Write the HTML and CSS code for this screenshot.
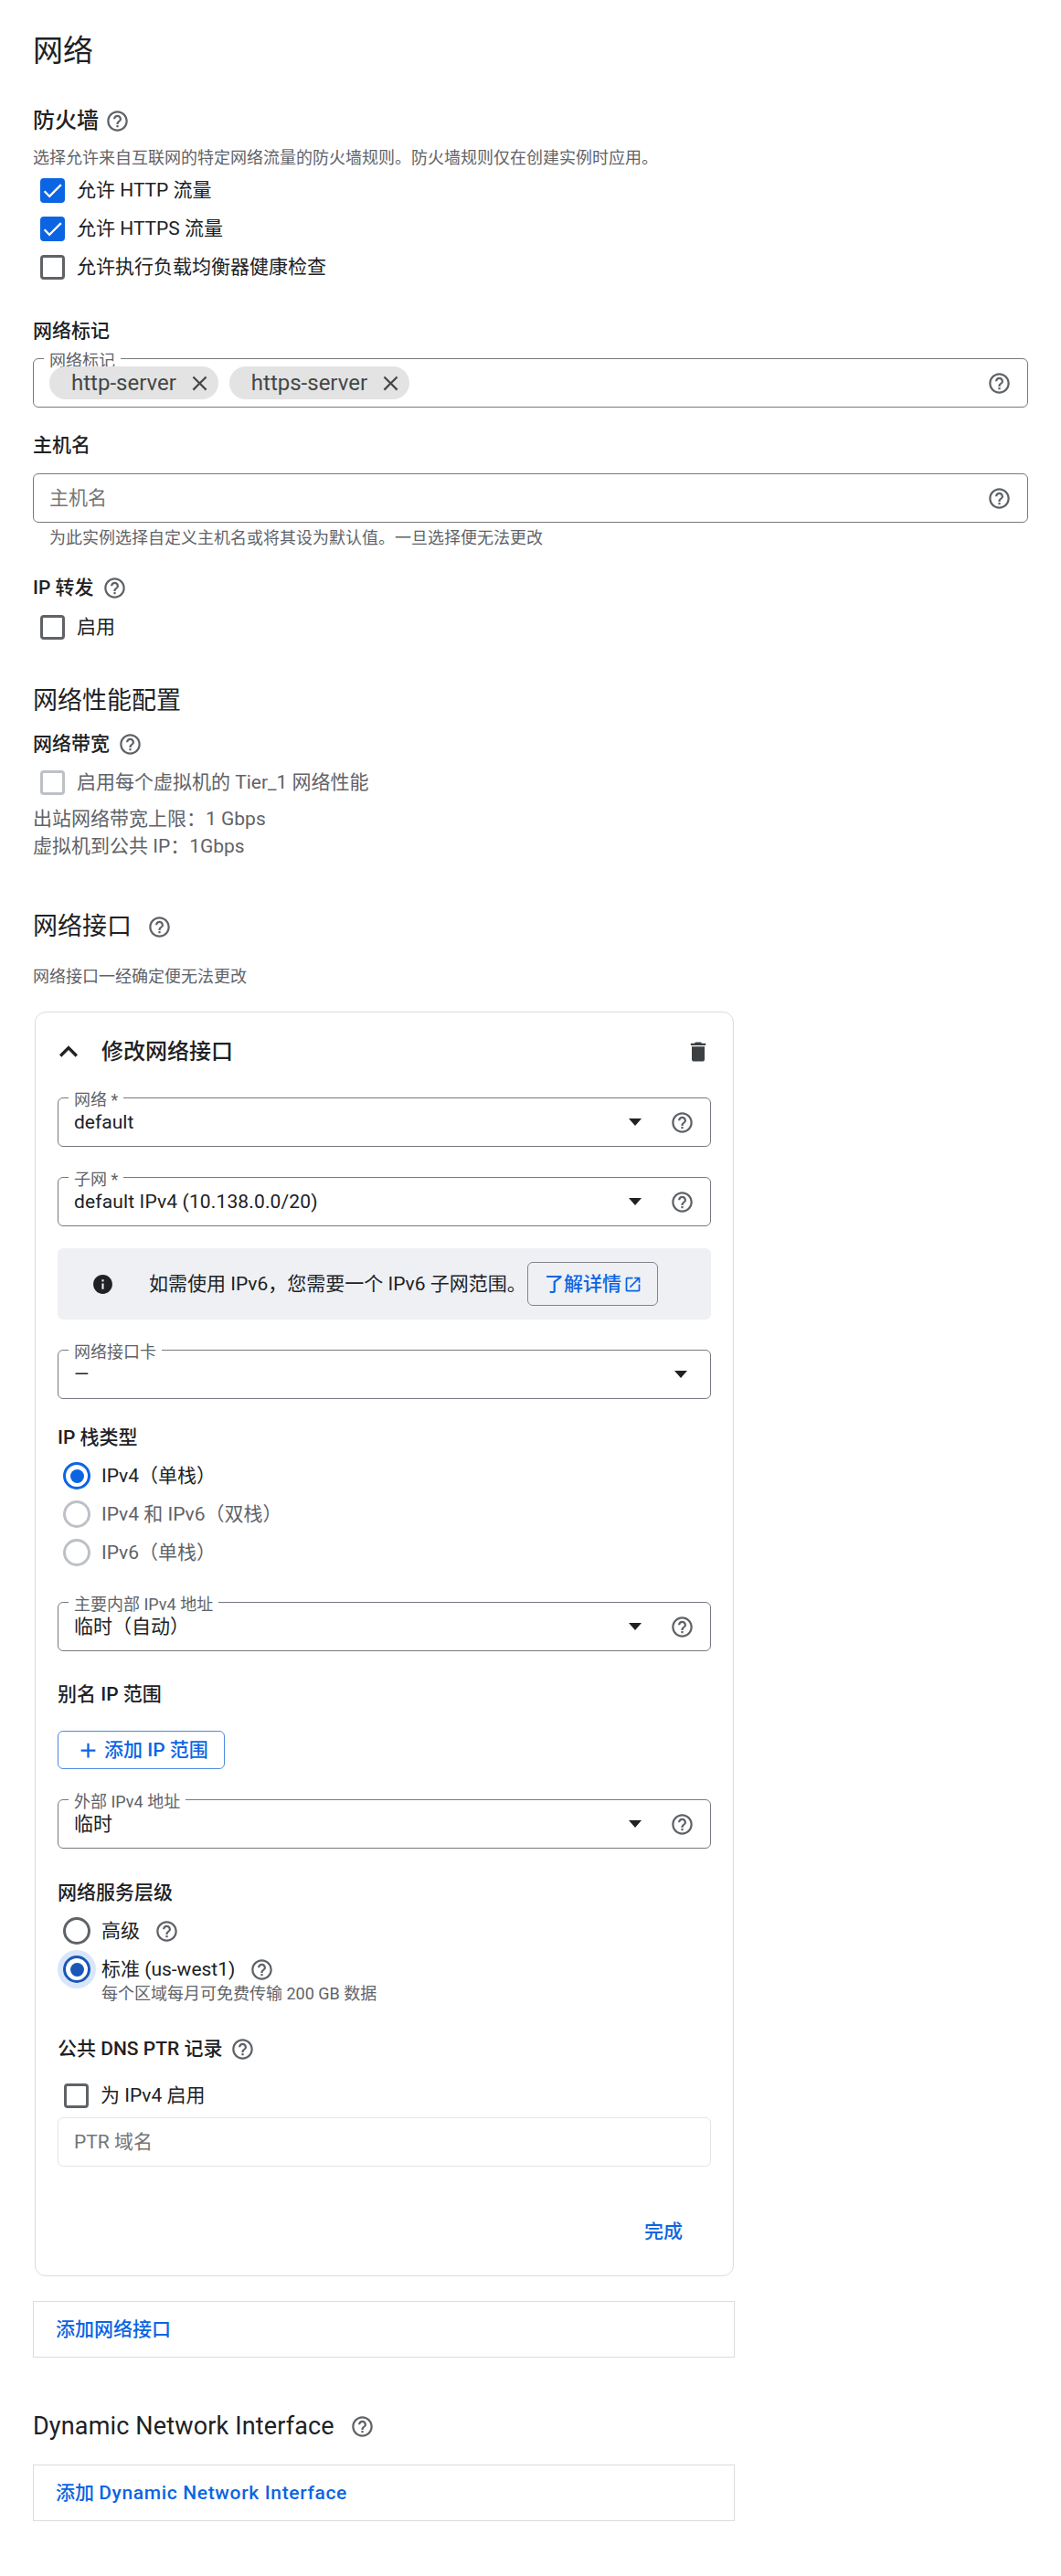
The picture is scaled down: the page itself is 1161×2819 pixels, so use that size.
FILE: index.html
```html
<!DOCTYPE html>
<html lang="zh-CN">
<head>
<meta charset="utf-8">
<title>网络</title>
<link rel="stylesheet" href="styles.css">
</head>
<body>
<svg class="sprite" aria-hidden="true">
  <symbol id="i-help" viewBox="0 0 24 24"><path d="M11 18h2v-2h-2v2zm1-16C6.48 2 2 6.48 2 12s4.48 10 10 10 10-4.48 10-10S17.52 2 12 2zm0 18c-4.41 0-8-3.59-8-8s3.59-8 8-8 8 3.59 8 8-3.59 8-8 8zm0-14c-2.21 0-4 1.79-4 4h2c0-1.1.9-2 2-2s2 .9 2 2c0 2-3 1.75-3 5h2c0-2.25 3-2.5 3-5 0-2.21-1.79-4-4-4z"/></symbol>
  <symbol id="i-close" viewBox="0 0 24 24"><path d="M19 6.41L17.59 5 12 10.59 6.41 5 5 6.41 10.59 12 5 17.59 6.41 19 12 13.41 17.59 19 19 17.59 13.41 12z"/></symbol>
  <symbol id="i-check" viewBox="0 0 24 24"><path d="M9 16.17L4.83 12l-1.42 1.41L9 19 21 7l-1.41-1.41z"/></symbol>
  <symbol id="i-less" viewBox="0 0 24 24"><path d="M12 8l-6 6 1.41 1.41L12 10.83l4.59 4.58L18 14z"/></symbol>
  <symbol id="i-delete" viewBox="0 0 24 24"><path d="M6 19c0 1.1.9 2 2 2h8c1.1 0 2-.9 2-2V7H6v12zM19 4h-3.5l-1-1h-5l-1 1H5v2h14V4z"/></symbol>
  <symbol id="i-info" viewBox="0 0 24 24"><path d="M12 2C6.48 2 2 6.48 2 12s4.48 10 10 10 10-4.48 10-10S17.52 2 12 2zm1 15h-2v-6h2v6zm0-8h-2V7h2v2z"/></symbol>
  <symbol id="i-open" viewBox="0 0 24 24"><path d="M19 19H5V5h7V3H5c-1.11 0-2 .9-2 2v14c0 1.1.89 2 2 2h14c1.1 0 2-.9 2-2v-7h-2v7zM14 3v2h3.59l-9.83 9.83 1.41 1.41L19 6.41V10h2V3h-7z"/></symbol>
  <symbol id="i-add" viewBox="0 0 24 24"><path d="M19 13h-6v6h-2v-6H5v-2h6V5h2v6h6v2z"/></symbol>
</svg>

<main class="page">
  <h1 class="title">网络</h1>

  <h2 class="label-lg mt-40">防火墙 <svg class="help"><use href="#i-help"/></svg></h2>
  <p class="desc mt-14">选择允许来自互联网的特定网络流量的防火墙规则。防火墙规则仅在创建实例时应用。</p>
  <div class="checks mt-2">
    <label class="check"><span class="box on"><svg><use href="#i-check"/></svg></span>允许 HTTP 流量</label>
    <label class="check"><span class="box on"><svg><use href="#i-check"/></svg></span>允许 HTTPS 流量</label>
    <label class="check"><span class="box"></span>允许执行负载均衡器健康检查</label>
  </div>

  <h3 class="label mt-34">网络标记</h3>
  <div class="field mt-15">
    <span class="float">网络标记</span>
    <div class="chips">
      <span class="chip">http-server<svg><use href="#i-close"/></svg></span>
      <span class="chip">https-server<svg><use href="#i-close"/></svg></span>
    </div>
    <svg class="help"><use href="#i-help"/></svg>
  </div>

  <h3 class="label mt-26">主机名</h3>
  <div class="field mt-16">
    <span class="value placeholder">主机名</span>
    <svg class="help"><use href="#i-help"/></svg>
  </div>
  <p class="desc hint mt-5">为此实例选择自定义主机名或将其设为默认值。一旦选择便无法更改</p>

  <h3 class="label mt-27">IP 转发 <svg class="help"><use href="#i-help"/></svg></h3>
  <label class="check mt-7"><span class="box"></span>启用</label>

  <h2 class="heading mt-40">网络性能配置</h2>
  <h3 class="label mt-12">网络带宽 <svg class="help"><use href="#i-help"/></svg></h3>
  <label class="check muted mt-6"><span class="box"></span>启用每个虚拟机的 Tier_1 网络性能</label>
  <p class="note mt-4">出站网络带宽上限：1 Gbps</p>
  <p class="note">虚拟机到公共 IP：1Gbps</p>

  <h2 class="heading mt-53">网络接口 <svg class="help"><use href="#i-help"/></svg></h2>
  <p class="desc mt-23">网络接口一经确定便无法更改</p>

  <section class="card mt-26">
    <header class="card-head">
      <svg class="chevron"><use href="#i-less"/></svg>
      <h3 class="card-title">修改网络接口</h3>
      <svg class="trash"><use href="#i-delete"/></svg>
    </header>

    <div class="field mt-28">
      <span class="float">网络 *</span>
      <span class="value">default</span>
      <span class="arrow"></span>
      <svg class="help"><use href="#i-help"/></svg>
    </div>

    <div class="field mt-33">
      <span class="float">子网 *</span>
      <span class="value spaced">default IPv4 (10.138.0.0/20)</span>
      <span class="arrow"></span>
      <svg class="help"><use href="#i-help"/></svg>
    </div>

    <div class="info mt-24">
      <svg class="info-icon"><use href="#i-info"/></svg>
      <span class="info-text">如需使用 IPv6，您需要一个 IPv6 子网范围。</span>
      <a class="learn">了解详情<svg><use href="#i-open"/></svg></a>
    </div>

    <div class="field mt-33">
      <span class="float">网络接口卡</span>
      <span class="value">—</span>
      <span class="arrow arrow-end"></span>
    </div>

    <h3 class="label mt-27">IP 栈类型</h3>
    <div class="mt-6">
      <label class="radio"><span class="dot on"></span>IPv4（单栈）</label>
      <label class="radio muted"><span class="dot"></span>IPv4 和 IPv6（双栈）</label>
      <label class="radio muted"><span class="dot"></span>IPv6（单栈）</label>
    </div>

    <div class="field mt-33">
      <span class="float">主要内部 IPv4 地址</span>
      <span class="value">临时（自动）</span>
      <span class="arrow"></span>
      <svg class="help"><use href="#i-help"/></svg>
    </div>

    <h3 class="label mt-32">别名 IP 范围</h3>
    <a class="add-range mt-25"><svg><use href="#i-add"/></svg>添加 IP 范围</a>

    <div class="field mt-33">
      <span class="float">外部 IPv4 地址</span>
      <span class="value">临时</span>
      <span class="arrow"></span>
      <svg class="help"><use href="#i-help"/></svg>
    </div>

    <h3 class="label mt-33">网络服务层级</h3>
    <div class="mt-6">
      <label class="radio"><span class="dot plain"></span>高级 <svg class="help"><use href="#i-help"/></svg></label>
      <label class="radio"><span class="dot on focus"></span>标准 (us-west1) <svg class="help"><use href="#i-help"/></svg></label>
      <p class="desc radio-sub">每个区域每月可免费传输 200 GB 数据</p>
    </div>

    <h3 class="label mt-33">公共 DNS PTR 记录 <svg class="help"><use href="#i-help"/></svg></h3>
    <label class="check inset mt-15"><span class="box"></span>为 IPv4 启用</label>
    <div class="field disabled mt-3">
      <span class="value placeholder">PTR 域名</span>
    </div>

    <div class="done-row mt-50"><a class="done">完成</a></div>
  </section>

  <div class="add-box mt-27"><a class="add-link">添加网络接口</a></div>

  <h2 class="heading dyn-heading mt-55">Dynamic Network Interface <svg class="help"><use href="#i-help"/></svg></h2>
  <div class="add-box mt-22"><a class="add-link">添加 <span class="wide">Dynamic Network Interface</span></a></div>
</main>
</body>
</html>
```

FILE: styles.css
```css
* { box-sizing: border-box; }
html, body { margin: 0; background: #fff; }
body {
  font-family: Roboto, "Noto Sans CJK SC", sans-serif;
  font-size: 21px;
  line-height: 30px;
  color: #202124;
}
h1, h2, h3, p { margin: 0; font-size: inherit; font-weight: inherit; }
.sprite { display: none; }
.page { padding: 35px 36px 60px; }

.mt-2 { margin-top: 2px; } .mt-3 { margin-top: 3px; } .mt-4 { margin-top: 4px; }
.mt-5 { margin-top: 5px; } .mt-6 { margin-top: 6px; } .mt-7 { margin-top: 7px; }
.mt-12 { margin-top: 12px; } .mt-14 { margin-top: 14px; } .mt-15 { margin-top: 15px; }
.mt-16 { margin-top: 16px; } .mt-22 { margin-top: 22px; } .mt-23 { margin-top: 23px; }
.mt-24 { margin-top: 24px; } .mt-25 { margin-top: 25px; } .mt-26 { margin-top: 26px; }
.mt-27 { margin-top: 27px; } .mt-28 { margin-top: 28px; } .mt-32 { margin-top: 32px; }
.mt-33 { margin-top: 33px; } .mt-34 { margin-top: 34px; } .mt-40 { margin-top: 40px; }
.mt-50 { margin-top: 50px; } .mt-53 { margin-top: 53px; } .mt-55 { margin-top: 55px; }

.title { font-size: 33px; line-height: 42px; font-weight: 400; }
.heading { font-size: 27px; line-height: 40px; font-weight: 400; display: flex; align-items: center; gap: 17px; }
.dyn-heading { letter-spacing: .15px; gap: 17px; }
.label-lg { font-size: 24px; line-height: 30px; font-weight: 500; display: flex; align-items: center; gap: 7px; }
.label { font-size: 21px; line-height: 30px; font-weight: 500; display: flex; align-items: center; gap: 9px; }
.desc { font-size: 18px; line-height: 24px; color: #5f6368; }
.hint { padding-left: 18px; }
.note { line-height: 30px; color: #5f6368; }

.help { width: 27px; height: 27px; fill: #5f6368; flex: none; }

.check { display: flex; align-items: center; gap: 13px; height: 42px; padding-left: 8px; }
.check.inset { padding-left: 7px; }
.box { width: 27px; height: 27px; border: 3px solid #5f6368; border-radius: 4px; flex: none; }
.box.on { background: #0b65e3; border-color: #0b65e3; }
.box.on svg { display: block; width: 27px; height: 27px; margin: -3px; fill: #fff; }
.check.muted, .radio.muted { color: #5f6368; }
.check.muted .box { border-color: #bdc1c6; }

.field {
  position: relative;
  display: flex;
  align-items: center;
  height: 54px;
  padding: 0 17px;
  border: 1px solid #757a80;
  border-radius: 6px;
}
.field.disabled { border-color: #e3e5e8; }
.float {
  position: absolute;
  top: -10px;
  left: 11px;
  padding: 0 6px;
  font-size: 18px;
  line-height: 24px;
  color: #5f6368;
  background: #fff;
}
.value { flex: 1; }
.spaced { letter-spacing: .14px; }
.placeholder { color: #757575; }
.arrow {
  width: 0;
  height: 0;
  margin-right: 31px;
  border-left: 7.5px solid transparent;
  border-right: 7.5px solid transparent;
  border-top: 8px solid #202124;
}
.arrow.arrow-end { margin-right: 8px; }

.chips { position: relative; flex: 1; display: flex; gap: 12px; }
.chip {
  display: flex;
  align-items: center;
  gap: 12px;
  height: 36px;
  padding: 0 7px 0 24px;
  border-radius: 18px;
  background: #e3e3e3;
  color: #444746;
  font-size: 24px;
}
.chip svg { width: 27px; height: 27px; fill: #444746; }

.card {
  width: 765px;
  margin-left: 2px;
  padding: 21px 24px 27px;
  border: 1px solid #dadce0;
  border-radius: 12px;
}
.card-head { display: flex; align-items: center; height: 44px; }
.chevron { width: 40px; height: 40px; margin-left: -8px; margin-right: 16px; fill: #202124; }
.card-title { flex: 1; font-size: 24px; line-height: 30px; font-weight: 500; }
.trash { width: 28px; height: 28px; fill: #3c4043; }

.info {
  display: flex;
  align-items: center;
  height: 78px;
  padding: 0 58px 0 37px;
  background: #eef0f4;
  border-radius: 6px;
}
.info-icon { width: 25px; height: 25px; fill: #202124; margin-right: 38px; flex: none; }
.info-text { flex: 1; }
.learn {
  display: flex;
  align-items: center;
  width: 143px;
  height: 48px;
  padding-left: 18px;
  color: #0b65e3;
  font-weight: 500;
  border: 1px solid #80868b;
  border-radius: 6px;
}
.learn svg { width: 21px; height: 21px; margin-left: 2px; fill: #0b65e3; }

.radio { display: flex; align-items: center; height: 42px; gap: 0; }
.dot {
  position: relative;
  width: 30px;
  height: 30px;
  margin: 0 12px 0 6px;
  border: 3px solid #bdc1c6;
  border-radius: 50%;
  flex: none;
}
.dot.plain { border-color: #5f6368; }
.dot.on { border-color: #0b65e3; }
.dot.on::after {
  content: "";
  position: absolute;
  inset: 4.5px;
  border-radius: 50%;
  background: #0b65e3;
}
.dot.focus { border-color: #1a56b8; box-shadow: 0 0 0 6px #d8e6fb; }
.dot.focus::after { background: #1a56b8; }
.radio .help { margin-left: 16px; }
.radio-sub { margin-top: -6px; padding-left: 48px; }

.add-range {
  display: flex;
  align-items: center;
  width: 183px;
  height: 42px;
  padding-left: 19px;
  color: #0b65e3;
  font-weight: 500;
  border: 1px solid #4d8ae0;
  border-radius: 6px;
}
.add-range svg { width: 27px; height: 27px; margin-right: 4px; fill: #0b65e3; }

.done-row { display: flex; justify-content: flex-end; height: 42px; align-items: center; padding-right: 31px; }
.done, .add-link { color: #0b65e3; font-weight: 500; }
.wide { letter-spacing: .65px; }

.add-box {
  display: flex;
  align-items: center;
  width: 768px;
  height: 62px;
  padding-left: 24px;
  border: 1px solid #dadce0;
}
```
